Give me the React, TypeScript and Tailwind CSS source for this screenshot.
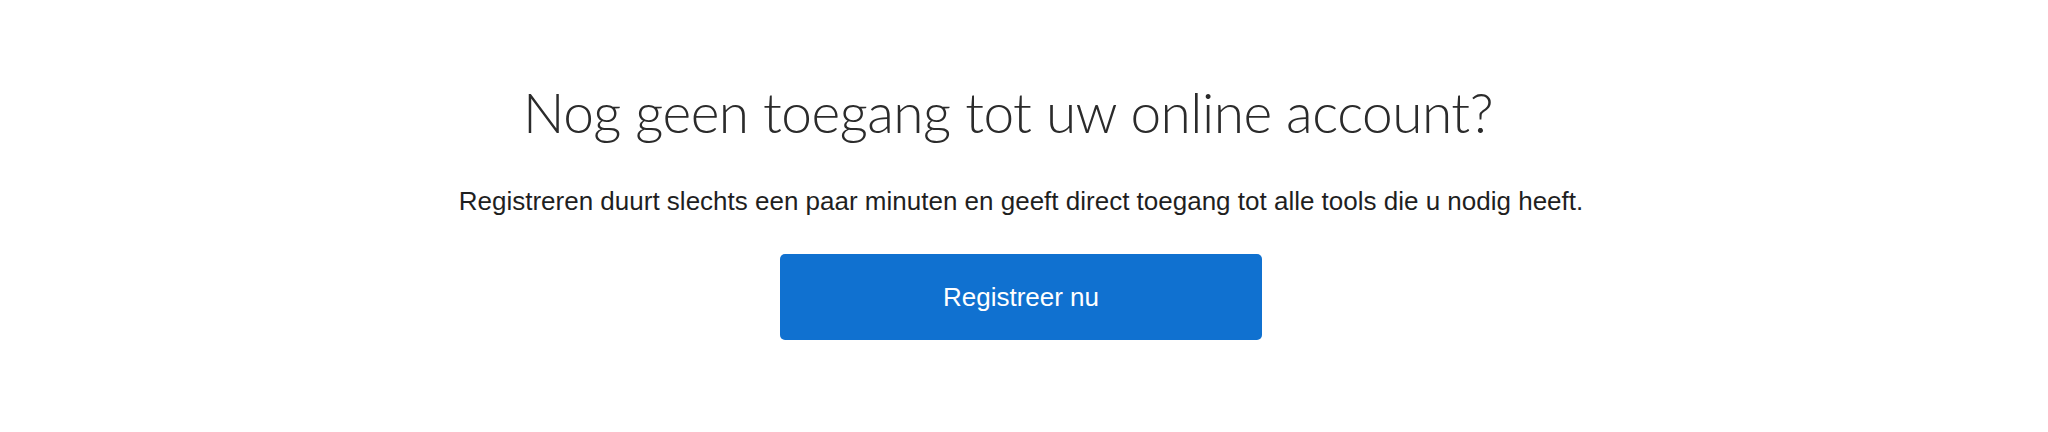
import React from "react";

export default function App() {
  return (
    <div className="w-[2048px] h-[432px] bg-white flex flex-col items-center pr-[6px]">
      <h1 className="mt-[80px] mr-[26px] text-[55px] leading-[64px] font-light text-[#2b2b2b] tracking-[-0.5px] font-['Lato','Noto_Sans',sans-serif]">
        Nog geen toegang tot uw online account?
      </h1>
      <p className="mt-[42px] text-[26px] leading-[30px] text-[#1f1f1f] font-['Liberation_Sans',Arial,sans-serif]">
        Registreren duurt slechts een paar minuten en geeft direct toegang tot alle tools die u nodig heeft.
      </p>
      <button className="mt-[38px] w-[482px] h-[86px] rounded-[5px] bg-[#1071d0] text-white text-[26px] font-['Liberation_Sans',Arial,sans-serif]">
        Registreer nu
      </button>
    </div>
  );
}
